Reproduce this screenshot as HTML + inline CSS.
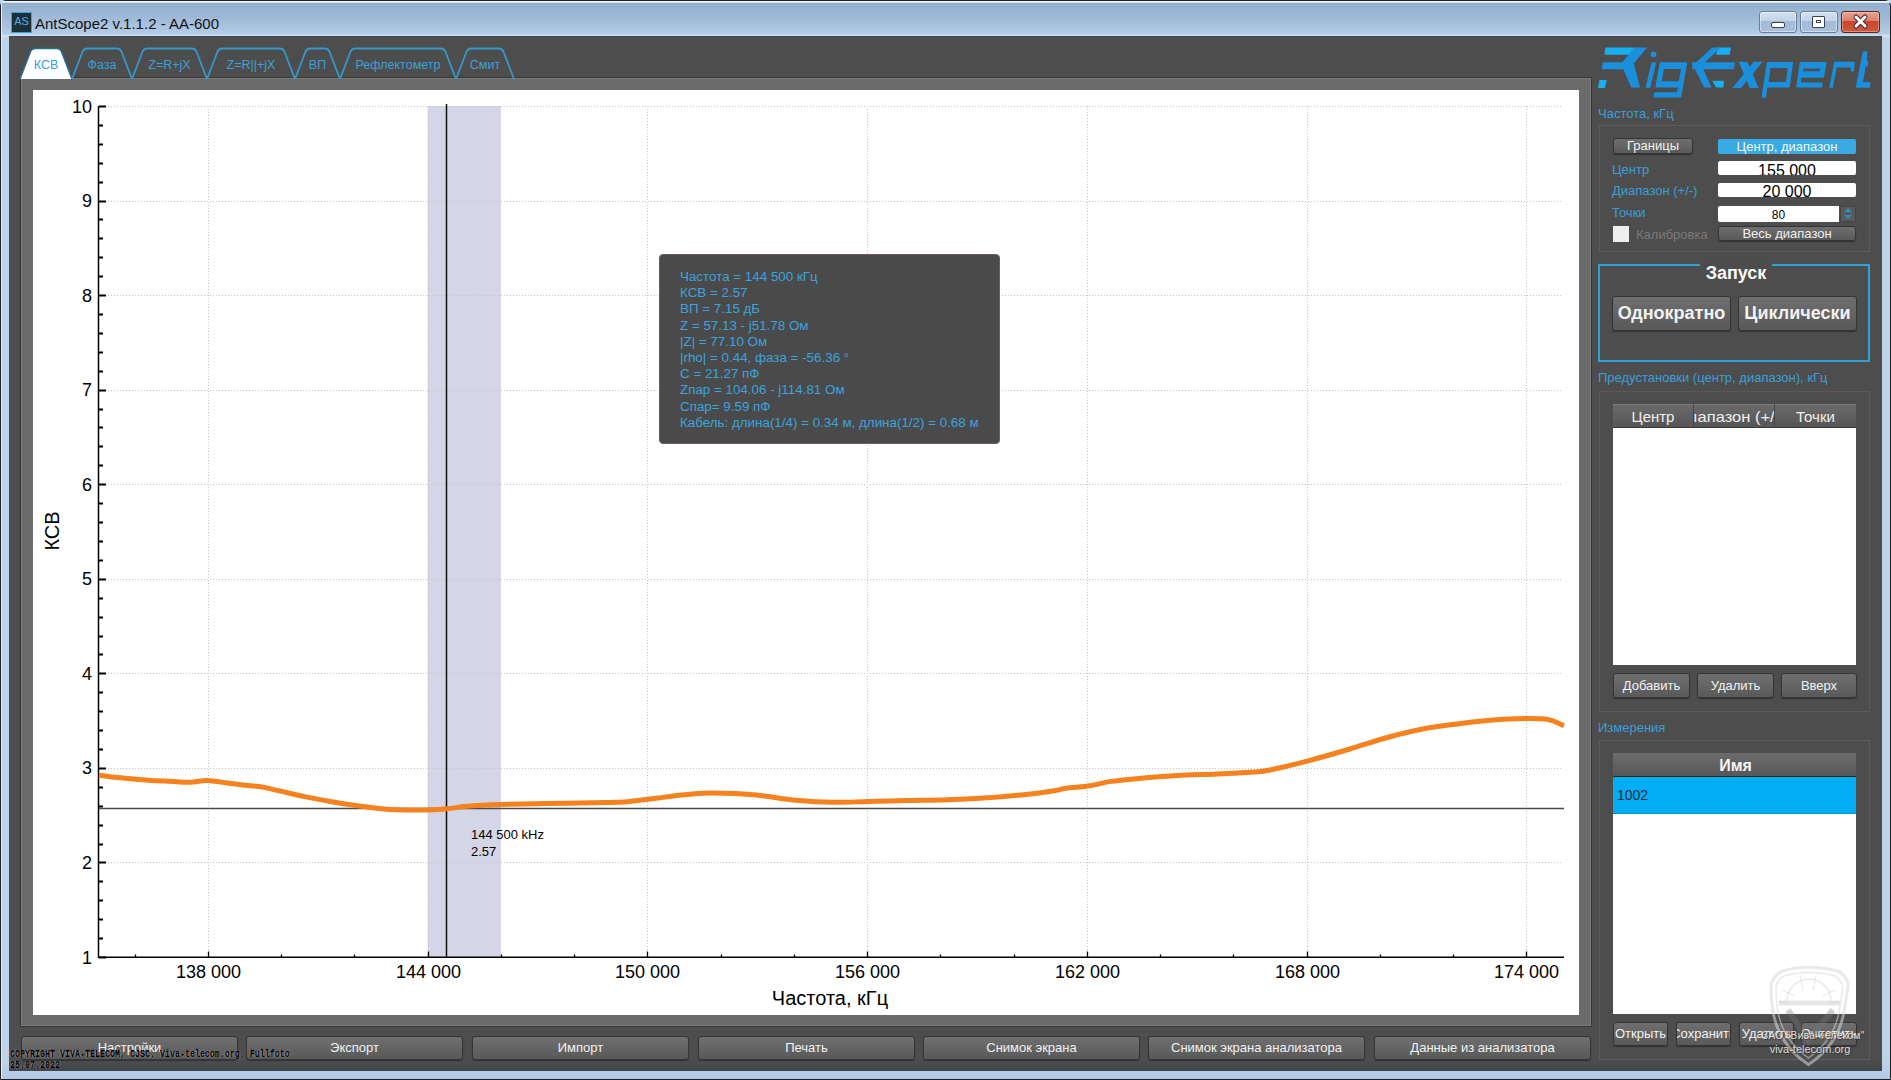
<!DOCTYPE html>
<html><head><meta charset="utf-8">
<style>
*{box-sizing:border-box;margin:0;padding:0}
html,body{width:1891px;height:1080px;overflow:hidden}
body{position:relative;font-family:"Liberation Sans", sans-serif;background:#bdd3ea}
.abs{position:absolute}
.btn{position:absolute;border:1px solid #353535;border-radius:3px;background:linear-gradient(#6f6f6f,#595959);color:#f2f2f2;text-align:center;white-space:nowrap;overflow:hidden;box-shadow:0 1px 1px rgba(0,0,0,.35);display:flex;justify-content:center}
.lbl{position:absolute;color:#3a9fd8;font-size:13px;white-space:nowrap}
</style></head><body>
<!-- window frame -->
<div class="abs" style="left:0;top:0;width:1891px;height:1080px;border:1px solid #1e2226;border-radius:6px 6px 0 0;background:linear-gradient(180deg,#94a6c0 0px,#93b1d1 3px,#a0bad8 18px,#b3cde8 33px,#d6e6f5 35px,#bcd3ea 37px,#bcd3ea 1060px,#b0c8e2 1079px)"></div>
<div class="abs" style="left:1px;top:1px;width:1889px;height:2px;background:linear-gradient(#ffffff,#c8d6e6);border-radius:6px 6px 0 0"></div>
<div class="abs" style="left:1px;top:3px;width:1px;height:1076px;background:#e8f2fb"></div>
<!-- title -->
<div class="abs" style="left:11px;top:12px;width:21px;height:21px;background:#1e2f3c;border:1px solid #37a6e0"></div>
<div class="abs" style="left:12px;top:15px;width:19px;text-align:center;font-size:11px;color:#4fb0e0">AS</div>
<div class="abs" style="left:35px;top:15px;font-size:15px;color:#111">AntScope2 v.1.1.2 - AA-600</div>
<!-- caption buttons -->
<div class="abs" style="left:1759px;top:11px;width:38px;height:22px;border:1px solid #6b7f98;border-radius:3px;background:linear-gradient(#d3e1f0 0%,#c2d4e8 45%,#a3bbd8 47%,#a8c0dc 100%);box-shadow:inset 0 0 0 1px rgba(255,255,255,.45)"></div>
<div class="abs" style="left:1771px;top:22px;width:14px;height:6px;background:#fff;border:1px solid #3a4252;border-radius:2px"></div>
<div class="abs" style="left:1800px;top:11px;width:38px;height:22px;border:1px solid #6b7f98;border-radius:3px;background:linear-gradient(#d3e1f0 0%,#c2d4e8 45%,#a3bbd8 47%,#a8c0dc 100%);box-shadow:inset 0 0 0 1px rgba(255,255,255,.45)"></div>
<div class="abs" style="left:1812px;top:16px;width:13px;height:12px;background:#fff;border:1px solid #3a4252;border-radius:1px"></div>
<div class="abs" style="left:1816px;top:20px;width:5px;height:3px;border:1px solid #3a4252"></div>
<div class="abs" style="left:1841px;top:11px;width:39px;height:22px;border:1px solid #5a2620;border-radius:3px;background:linear-gradient(#eba394 0%,#dc7d6a 45%,#c9452c 47%,#cf5a3e 100%);box-shadow:inset 0 0 0 1px rgba(255,220,210,.4)"></div>
<svg class="abs" style="left:1850px;top:13px" width="22" height="18"><path d="M6,4 L15,13 M15,4 L6,13" stroke="#4a2a2a" stroke-width="5" stroke-linecap="round"/><path d="M6,4 L15,13 M15,4 L6,13" stroke="#fff" stroke-width="3" stroke-linecap="round"/></svg>
<!-- app content -->
<div class="abs" style="left:9px;top:36px;width:1873px;height:1035px;background:linear-gradient(180deg,#3c434c 0,#4d4d4d 2px,#4d4d4d 1024px,#424548 1035px)"></div>
<!-- chart frame -->
<div class="abs" style="left:20px;top:77px;width:1572px;height:950px;background:#6b6b6b;border:1px solid #363636;box-shadow:inset 1px 1px 0 #7c7c7c,inset -1px -1px 0 #7c7c7c"></div>
<svg width="1891" height="1080" style="position:absolute;left:0;top:0">
<path d="M20.0,79 L30.0,53 Q31.0,48.5 36.0,48.5 L56.0,48.5 Q61.0,48.5 62.0,53 L72.0,79 Z" fill="#fdfeff" stroke="none"/>
<path d="M20.0,79 L30.0,53 Q31.0,48.5 36.0,48.5 L56.0,48.5 Q61.0,48.5 62.0,53 L72.0,79" fill="none" stroke="#2a6f90" stroke-width="1.5"/>
<text x="46.0" y="69" text-anchor="middle" font-family="Liberation Sans, sans-serif" font-size="12.5" fill="#3aa0d5">КСВ</text>
<path d="M72.0,79 L82.0,53 Q83.0,48.5 88.0,48.5 L116.0,48.5 Q121.0,48.5 122.0,53 L132.0,79" fill="none" stroke="#3597c8" stroke-width="1.8"/>
<text x="102.0" y="69" text-anchor="middle" font-family="Liberation Sans, sans-serif" font-size="12.5" fill="#3aa0d5">Фаза</text>
<path d="M132.0,79 L142.0,53 Q143.0,48.5 148.0,48.5 L191.0,48.5 Q196.0,48.5 197.0,53 L207.0,79" fill="none" stroke="#3597c8" stroke-width="1.8"/>
<text x="169.5" y="69" text-anchor="middle" font-family="Liberation Sans, sans-serif" font-size="12.5" fill="#3aa0d5">Z=R+jX</text>
<path d="M207.0,79 L217.0,53 Q218.0,48.5 223.0,48.5 L279.0,48.5 Q284.0,48.5 285.0,53 L295.0,79" fill="none" stroke="#3597c8" stroke-width="1.8"/>
<text x="251.0" y="69" text-anchor="middle" font-family="Liberation Sans, sans-serif" font-size="12.5" fill="#3aa0d5">Z=R||+jX</text>
<path d="M295.0,79 L305.0,53 Q306.0,48.5 311.0,48.5 L324.0,48.5 Q329.0,48.5 330.0,53 L340.0,79" fill="none" stroke="#3597c8" stroke-width="1.8"/>
<text x="317.5" y="69" text-anchor="middle" font-family="Liberation Sans, sans-serif" font-size="12.5" fill="#3aa0d5">ВП</text>
<path d="M340.0,79 L350.0,53 Q351.0,48.5 356.0,48.5 L440.0,48.5 Q445.0,48.5 446.0,53 L456.0,79" fill="none" stroke="#3597c8" stroke-width="1.8"/>
<text x="398.0" y="69" text-anchor="middle" font-family="Liberation Sans, sans-serif" font-size="12.5" fill="#3aa0d5">Рефлектометр</text>
<path d="M456.0,79 L466.0,53 Q467.0,48.5 472.0,48.5 L498.0,48.5 Q503.0,48.5 504.0,53 L514.0,79" fill="none" stroke="#3597c8" stroke-width="1.8"/>
<text x="485.0" y="69" text-anchor="middle" font-family="Liberation Sans, sans-serif" font-size="12.5" fill="#3aa0d5">Смит</text>
</svg>
<div class="abs" style="left:33px;top:90px;width:1546px;height:925px;background:#fff"></div>
<svg width="1891" height="1080" style="position:absolute;left:0;top:0">
<rect x="427.6" y="106" width="73.3" height="851" fill="#d4d5e6"/>
<line x1="208.5" y1="106" x2="208.5" y2="957" stroke="#c4c4c4" stroke-width="1" stroke-dasharray="1,2"/>
<line x1="428.5" y1="106" x2="428.5" y2="957" stroke="#c4c4c4" stroke-width="1" stroke-dasharray="1,2"/>
<line x1="647.5" y1="106" x2="647.5" y2="957" stroke="#c4c4c4" stroke-width="1" stroke-dasharray="1,2"/>
<line x1="867.5" y1="106" x2="867.5" y2="957" stroke="#c4c4c4" stroke-width="1" stroke-dasharray="1,2"/>
<line x1="1087.5" y1="106" x2="1087.5" y2="957" stroke="#c4c4c4" stroke-width="1" stroke-dasharray="1,2"/>
<line x1="1307.5" y1="106" x2="1307.5" y2="957" stroke="#c4c4c4" stroke-width="1" stroke-dasharray="1,2"/>
<line x1="1526.5" y1="106" x2="1526.5" y2="957" stroke="#c4c4c4" stroke-width="1" stroke-dasharray="1,2"/>
<line x1="99" y1="862.5" x2="1563" y2="862.5" stroke="#c4c4c4" stroke-width="1" stroke-dasharray="1,2"/>
<line x1="99" y1="768.5" x2="1563" y2="768.5" stroke="#c4c4c4" stroke-width="1" stroke-dasharray="1,2"/>
<line x1="99" y1="673.5" x2="1563" y2="673.5" stroke="#c4c4c4" stroke-width="1" stroke-dasharray="1,2"/>
<line x1="99" y1="579.5" x2="1563" y2="579.5" stroke="#c4c4c4" stroke-width="1" stroke-dasharray="1,2"/>
<line x1="99" y1="484.5" x2="1563" y2="484.5" stroke="#c4c4c4" stroke-width="1" stroke-dasharray="1,2"/>
<line x1="99" y1="390.5" x2="1563" y2="390.5" stroke="#c4c4c4" stroke-width="1" stroke-dasharray="1,2"/>
<line x1="99" y1="295.5" x2="1563" y2="295.5" stroke="#c4c4c4" stroke-width="1" stroke-dasharray="1,2"/>
<line x1="99" y1="201.5" x2="1563" y2="201.5" stroke="#c4c4c4" stroke-width="1" stroke-dasharray="1,2"/>
<line x1="99" y1="106.5" x2="1563" y2="106.5" stroke="#c4c4c4" stroke-width="1" stroke-dasharray="1,2"/>
<line x1="98.5" y1="106" x2="98.5" y2="958" stroke="#000" stroke-width="1.5"/>
<line x1="98" y1="957.3" x2="1564" y2="957.3" stroke="#000" stroke-width="1.5"/>
<line x1="99" y1="957.5" x2="106" y2="957.5" stroke="#000" stroke-width="2"/>
<line x1="99" y1="938.5" x2="103" y2="938.5" stroke="#000" stroke-width="2"/>
<line x1="99" y1="919.5" x2="103" y2="919.5" stroke="#000" stroke-width="2"/>
<line x1="99" y1="900.5" x2="103" y2="900.5" stroke="#000" stroke-width="2"/>
<line x1="99" y1="881.5" x2="103" y2="881.5" stroke="#000" stroke-width="2"/>
<line x1="99" y1="862.5" x2="106" y2="862.5" stroke="#000" stroke-width="2"/>
<line x1="99" y1="844.5" x2="103" y2="844.5" stroke="#000" stroke-width="2"/>
<line x1="99" y1="825.5" x2="103" y2="825.5" stroke="#000" stroke-width="2"/>
<line x1="99" y1="806.5" x2="103" y2="806.5" stroke="#000" stroke-width="2"/>
<line x1="99" y1="787.5" x2="103" y2="787.5" stroke="#000" stroke-width="2"/>
<line x1="99" y1="768.5" x2="106" y2="768.5" stroke="#000" stroke-width="2"/>
<line x1="99" y1="749.5" x2="103" y2="749.5" stroke="#000" stroke-width="2"/>
<line x1="99" y1="730.5" x2="103" y2="730.5" stroke="#000" stroke-width="2"/>
<line x1="99" y1="711.5" x2="103" y2="711.5" stroke="#000" stroke-width="2"/>
<line x1="99" y1="692.5" x2="103" y2="692.5" stroke="#000" stroke-width="2"/>
<line x1="99" y1="673.5" x2="106" y2="673.5" stroke="#000" stroke-width="2"/>
<line x1="99" y1="654.5" x2="103" y2="654.5" stroke="#000" stroke-width="2"/>
<line x1="99" y1="636.5" x2="103" y2="636.5" stroke="#000" stroke-width="2"/>
<line x1="99" y1="617.5" x2="103" y2="617.5" stroke="#000" stroke-width="2"/>
<line x1="99" y1="598.5" x2="103" y2="598.5" stroke="#000" stroke-width="2"/>
<line x1="99" y1="579.5" x2="106" y2="579.5" stroke="#000" stroke-width="2"/>
<line x1="99" y1="560.5" x2="103" y2="560.5" stroke="#000" stroke-width="2"/>
<line x1="99" y1="541.5" x2="103" y2="541.5" stroke="#000" stroke-width="2"/>
<line x1="99" y1="522.5" x2="103" y2="522.5" stroke="#000" stroke-width="2"/>
<line x1="99" y1="503.5" x2="103" y2="503.5" stroke="#000" stroke-width="2"/>
<line x1="99" y1="484.5" x2="106" y2="484.5" stroke="#000" stroke-width="2"/>
<line x1="99" y1="465.5" x2="103" y2="465.5" stroke="#000" stroke-width="2"/>
<line x1="99" y1="446.5" x2="103" y2="446.5" stroke="#000" stroke-width="2"/>
<line x1="99" y1="427.5" x2="103" y2="427.5" stroke="#000" stroke-width="2"/>
<line x1="99" y1="409.5" x2="103" y2="409.5" stroke="#000" stroke-width="2"/>
<line x1="99" y1="390.5" x2="106" y2="390.5" stroke="#000" stroke-width="2"/>
<line x1="99" y1="371.5" x2="103" y2="371.5" stroke="#000" stroke-width="2"/>
<line x1="99" y1="352.5" x2="103" y2="352.5" stroke="#000" stroke-width="2"/>
<line x1="99" y1="333.5" x2="103" y2="333.5" stroke="#000" stroke-width="2"/>
<line x1="99" y1="314.5" x2="103" y2="314.5" stroke="#000" stroke-width="2"/>
<line x1="99" y1="295.5" x2="106" y2="295.5" stroke="#000" stroke-width="2"/>
<line x1="99" y1="276.5" x2="103" y2="276.5" stroke="#000" stroke-width="2"/>
<line x1="99" y1="257.5" x2="103" y2="257.5" stroke="#000" stroke-width="2"/>
<line x1="99" y1="238.5" x2="103" y2="238.5" stroke="#000" stroke-width="2"/>
<line x1="99" y1="219.5" x2="103" y2="219.5" stroke="#000" stroke-width="2"/>
<line x1="99" y1="201.5" x2="106" y2="201.5" stroke="#000" stroke-width="2"/>
<line x1="99" y1="182.5" x2="103" y2="182.5" stroke="#000" stroke-width="2"/>
<line x1="99" y1="163.5" x2="103" y2="163.5" stroke="#000" stroke-width="2"/>
<line x1="99" y1="144.5" x2="103" y2="144.5" stroke="#000" stroke-width="2"/>
<line x1="99" y1="125.5" x2="103" y2="125.5" stroke="#000" stroke-width="2"/>
<line x1="99" y1="106.5" x2="106" y2="106.5" stroke="#000" stroke-width="2"/>
<text x="92" y="963.5" text-anchor="end" font-family='Liberation Sans, sans-serif' font-size="18" fill="#000">1</text>
<text x="92" y="868.9" text-anchor="end" font-family='Liberation Sans, sans-serif' font-size="18" fill="#000">2</text>
<text x="92" y="774.4" text-anchor="end" font-family='Liberation Sans, sans-serif' font-size="18" fill="#000">3</text>
<text x="92" y="679.8" text-anchor="end" font-family='Liberation Sans, sans-serif' font-size="18" fill="#000">4</text>
<text x="92" y="585.3" text-anchor="end" font-family='Liberation Sans, sans-serif' font-size="18" fill="#000">5</text>
<text x="92" y="490.7" text-anchor="end" font-family='Liberation Sans, sans-serif' font-size="18" fill="#000">6</text>
<text x="92" y="396.2" text-anchor="end" font-family='Liberation Sans, sans-serif' font-size="18" fill="#000">7</text>
<text x="92" y="301.6" text-anchor="end" font-family='Liberation Sans, sans-serif' font-size="18" fill="#000">8</text>
<text x="92" y="207.1" text-anchor="end" font-family='Liberation Sans, sans-serif' font-size="18" fill="#000">9</text>
<text x="92" y="112.5" text-anchor="end" font-family='Liberation Sans, sans-serif' font-size="18" fill="#000">10</text>
<line x1="135.5" y1="954.5" x2="135.5" y2="957" stroke="#000" stroke-width="1.3"/>
<line x1="208.5" y1="951.5" x2="208.5" y2="957" stroke="#000" stroke-width="1.3"/>
<text x="208.5" y="978" text-anchor="middle" font-family='Liberation Sans, sans-serif' font-size="18" fill="#000">138 000</text>
<line x1="281.5" y1="954.5" x2="281.5" y2="957" stroke="#000" stroke-width="1.3"/>
<line x1="354.5" y1="954.5" x2="354.5" y2="957" stroke="#000" stroke-width="1.3"/>
<line x1="428.5" y1="951.5" x2="428.5" y2="957" stroke="#000" stroke-width="1.3"/>
<text x="428.5" y="978" text-anchor="middle" font-family='Liberation Sans, sans-serif' font-size="18" fill="#000">144 000</text>
<line x1="501.5" y1="954.5" x2="501.5" y2="957" stroke="#000" stroke-width="1.3"/>
<line x1="574.5" y1="954.5" x2="574.5" y2="957" stroke="#000" stroke-width="1.3"/>
<line x1="647.5" y1="951.5" x2="647.5" y2="957" stroke="#000" stroke-width="1.3"/>
<text x="647.5" y="978" text-anchor="middle" font-family='Liberation Sans, sans-serif' font-size="18" fill="#000">150 000</text>
<line x1="721.5" y1="954.5" x2="721.5" y2="957" stroke="#000" stroke-width="1.3"/>
<line x1="794.5" y1="954.5" x2="794.5" y2="957" stroke="#000" stroke-width="1.3"/>
<line x1="867.5" y1="951.5" x2="867.5" y2="957" stroke="#000" stroke-width="1.3"/>
<text x="867.5" y="978" text-anchor="middle" font-family='Liberation Sans, sans-serif' font-size="18" fill="#000">156 000</text>
<line x1="940.5" y1="954.5" x2="940.5" y2="957" stroke="#000" stroke-width="1.3"/>
<line x1="1014.5" y1="954.5" x2="1014.5" y2="957" stroke="#000" stroke-width="1.3"/>
<line x1="1087.5" y1="951.5" x2="1087.5" y2="957" stroke="#000" stroke-width="1.3"/>
<text x="1087.5" y="978" text-anchor="middle" font-family='Liberation Sans, sans-serif' font-size="18" fill="#000">162 000</text>
<line x1="1160.5" y1="954.5" x2="1160.5" y2="957" stroke="#000" stroke-width="1.3"/>
<line x1="1233.5" y1="954.5" x2="1233.5" y2="957" stroke="#000" stroke-width="1.3"/>
<line x1="1307.5" y1="951.5" x2="1307.5" y2="957" stroke="#000" stroke-width="1.3"/>
<text x="1307.5" y="978" text-anchor="middle" font-family='Liberation Sans, sans-serif' font-size="18" fill="#000">168 000</text>
<line x1="1380.5" y1="954.5" x2="1380.5" y2="957" stroke="#000" stroke-width="1.3"/>
<line x1="1453.5" y1="954.5" x2="1453.5" y2="957" stroke="#000" stroke-width="1.3"/>
<line x1="1526.5" y1="951.5" x2="1526.5" y2="957" stroke="#000" stroke-width="1.3"/>
<text x="1526.5" y="978" text-anchor="middle" font-family='Liberation Sans, sans-serif' font-size="18" fill="#000">174 000</text>
<line x1="99" y1="808.5" x2="1564" y2="808.5" stroke="#4a4a4a" stroke-width="1.5"/>
<line x1="446.5" y1="104" x2="446.5" y2="957" stroke="#111" stroke-width="1.5"/>
<path d="M99.0,775.2 C102.7,775.6 112.8,777.0 121.0,777.8 C129.2,778.6 139.2,779.6 148.0,780.2 C156.8,780.8 167.0,781.1 174.0,781.5 C181.0,781.9 184.5,782.5 190.0,782.3 C195.5,782.1 200.8,780.4 207.0,780.5 C213.2,780.6 221.0,782.2 227.0,783.0 C233.0,783.8 237.2,784.3 243.0,785.0 C248.8,785.7 255.8,786.0 262.0,787.0 C268.2,788.0 272.7,789.4 280.0,791.0 C287.3,792.6 297.2,795.1 306.0,796.9 C314.8,798.7 324.2,800.5 333.0,802.0 C341.8,803.5 350.2,804.8 359.0,806.0 C367.8,807.2 377.2,808.6 386.0,809.3 C394.8,810.0 405.0,809.9 412.0,810.0 C419.0,810.1 422.2,810.2 428.0,810.0 C433.8,809.8 440.0,809.5 447.0,808.8 C454.0,808.1 461.2,806.7 470.0,806.0 C478.8,805.3 487.5,804.9 500.0,804.5 C512.5,804.1 529.2,803.8 545.0,803.5 C560.8,803.2 583.2,802.9 595.0,802.7 C606.8,802.5 610.2,802.5 616.0,802.3 C621.8,802.1 623.3,802.2 630.0,801.5 C636.7,800.8 647.3,799.4 656.0,798.3 C664.7,797.2 673.2,795.9 682.0,795.0 C690.8,794.1 700.2,793.2 709.0,793.0 C717.8,792.8 726.2,793.1 735.0,793.6 C743.8,794.1 751.8,794.6 762.0,795.7 C772.2,796.8 784.2,799.1 796.0,800.2 C807.8,801.3 821.0,802.1 833.0,802.3 C845.0,802.5 855.7,801.8 868.0,801.5 C880.3,801.2 893.8,800.8 907.0,800.5 C920.2,800.2 933.7,800.2 947.0,799.7 C960.3,799.2 973.8,798.7 987.0,797.8 C1000.2,796.9 1015.0,795.5 1026.0,794.4 C1037.0,793.3 1046.3,792.0 1053.0,791.0 C1059.7,790.0 1059.8,789.2 1066.0,788.3 C1072.2,787.4 1082.5,786.9 1090.0,785.7 C1097.5,784.6 1103.0,782.6 1111.0,781.4 C1119.0,780.2 1127.0,779.5 1138.0,778.5 C1149.0,777.5 1163.8,776.1 1177.0,775.4 C1190.2,774.6 1204.5,774.6 1217.0,774.0 C1229.5,773.4 1243.2,772.7 1252.0,772.0 C1260.8,771.3 1260.3,772.0 1270.0,770.0 C1279.7,768.0 1296.7,763.8 1310.0,760.3 C1323.3,756.8 1336.8,752.9 1350.0,749.0 C1363.2,745.1 1375.8,740.5 1389.0,737.0 C1402.2,733.5 1415.8,730.2 1429.0,727.8 C1442.2,725.4 1454.8,724.0 1468.0,722.5 C1481.2,721.0 1495.2,719.6 1508.0,719.0 C1520.8,718.4 1535.7,717.9 1545.0,719.0 C1554.3,720.1 1560.8,724.6 1564.0,725.7" fill="none" stroke="#f5821e" stroke-width="5" stroke-linejoin="round"/>
<text x="830" y="1005" text-anchor="middle" font-family='Liberation Sans, sans-serif' font-size="20" fill="#000">Частота, кГц</text>
<text transform="translate(59,531) rotate(-90)" text-anchor="middle" font-family='Liberation Sans, sans-serif' font-size="20" fill="#000">КСВ</text>
<text x="471" y="839" font-family='Liberation Sans, sans-serif' font-size="13" fill="#000">144 500 kHz</text>
<text x="471" y="856" font-family='Liberation Sans, sans-serif' font-size="13" fill="#000">2.57</text>
</svg><div class="abs" style="left:659px;top:254px;width:341px;height:190px;background:#4a4a4a;border-radius:4px;border:1px solid #6a5a6a"></div>
<div class="abs" style="left:680px;top:269px;color:#3aa3df;font-size:12px;line-height:16.2px;white-space:pre;transform:scaleX(1.115);transform-origin:0 0">Частота = 144 500 кГц
КСВ = 2.57
ВП = 7.15 дБ
Z = 57.13 - j51.78 Ом
|Z| = 77.10 Ом
|rho| = 0.44, фаза = -56.36 °
C = 21.27 пФ
Zпар = 104.06 - j114.81 Ом
Спар= 9.59 пФ
Кабель: длина(1/4) = 0.34 м, длина(1/2) = 0.68 м</div>
<svg width="1891" height="1080" style="position:absolute;left:0;top:0">
<g fill="#1a8fdc">
<polygon fill="#18aef0" points="1605.5,47.4 1634.8,47.4 1629.3,54.7 1604.3,54.7"/>
<polygon points="1602.7,62.2 1631,62.2 1627.3,69.3 1601.9,69.3"/>
<polygon points="1634.4,47.4 1647.1,47.4 1633,64.5 1620.5,64.5"/>
<polygon points="1621,64 1634,64 1640,87.6 1631.2,87.6"/>
<polygon fill="#18aef0" points="1599.5,80 1606.7,80 1605,88 1598,88"/>
<circle cx="1653.5" cy="54.3" r="2.9"/>
<polygon points="1651.5,62.4 1656.2,62.4 1650.3,87.8 1645.5,87.8"/>
<path fill-rule="evenodd" d="M1659.8,62.2 L1687.2,62.2 L1681.2,97.5 L1653.5,97.5 L1654.3,92.3 L1677.1,92.3 L1678,87.6 L1655.3,87.6 Z M1663.8,68.9 L1681.2,68.9 L1678.6,81.2 L1661.8,81.2 Z"/>
<polygon fill="#18aef0" points="1718,47.4 1731,47.4 1729.6,54.7 1716.1,54.7"/>
<polygon points="1712.2,47.4 1721,47.4 1701,66 1692.3,66"/>
<polygon points="1692.3,62.2 1735,62.2 1734,69.3 1692.3,69.3"/>
<polygon points="1692.3,64 1701,64 1711.4,87.6 1704.2,87.6"/>
<polygon fill="#18aef0" points="1712.2,80.8 1724.1,80.8 1723.3,87.6 1716.1,87.6"/>
<polygon points="1738.7,61.8 1747.5,61.8 1758.6,88 1749.8,88"/>
<polygon points="1753.8,61.8 1762.5,61.8 1741.1,88 1732.4,88"/>
<path fill-rule="evenodd" d="M1767,62 L1793.3,62 L1789.6,87.5 L1767.2,87.5 L1766,97.7 L1761.4,97.7 Z M1770.5,68 L1787.8,68 L1786,82 L1768.6,82 Z"/>
<path fill-rule="evenodd" d="M1799.8,62 L1826.7,62 L1823.9,77.8 L1801.5,77.8 L1800.9,82.4 L1822.9,82.4 L1822,87.5 L1796.1,87.5 Z M1803.5,68.5 L1820.2,68.5 L1819.7,71.3 L1803,71.3 Z"/>
<polygon points="1834.3,61.8 1854.7,61.8 1854,71.5 1850.6,71.5 1851,67.4 1836.8,67.4 1832.8,87.8 1829.2,87.8"/>
<polygon points="1862.8,51.6 1867.4,51.6 1866.6,60.8 1868.4,60.8 1867.8,66.4 1865.8,66.4 1862.9,82.2 1870.5,82.2 1870,87.8 1855.7,87.8"/>
</g></svg>
<div class="lbl" style="left:1598px;top:106px">Частота, кГц</div>
<div class="abs" style="left:1599px;top:125px;width:271px;height:127px;border:1px solid #5a5a5a"></div>
<div class="btn" style="left:1613px;top:138px;width:80px;height:16px;font-size:13px;line-height:14px">Границы</div>
<div class="abs" style="left:1718px;top:139px;width:138px;height:15px;background:#3aaae2;border-radius:2px;color:#f4f8fc;font-size:13px;line-height:15px;text-align:center">Центр, диапазон</div>
<div class="lbl" style="left:1612px;top:162px">Центр</div>
<div class="abs" style="left:1718px;top:161px;width:138px;height:14px;background:#fff;border-radius:2px;overflow:hidden;color:#000;font-size:16px;line-height:19px;text-align:center">155 000</div>
<div class="lbl" style="left:1612px;top:183px">Диапазон (+/-)</div>
<div class="abs" style="left:1718px;top:183px;width:138px;height:14px;background:#fff;border-radius:2px;overflow:hidden;color:#000;font-size:16px;line-height:18px;text-align:center">20 000</div>
<div class="lbl" style="left:1612px;top:205px">Точки</div>
<div class="abs" style="left:1718px;top:206px;width:121px;height:16px;background:#fff;border-radius:2px 0 0 2px;color:#000;font-size:12px;line-height:18px;text-align:center">80</div>
<div class="abs" style="left:1840px;top:206px;width:16px;height:16px;background:#5a5a5a;border:1px solid #444"></div>
<div class="abs" style="left:1844px;top:208px;width:0;height:0;border-left:4px solid transparent;border-right:4px solid transparent;border-bottom:4px solid #2c8fbf"></div>
<div class="abs" style="left:1844px;top:215px;width:0;height:0;border-left:4px solid transparent;border-right:4px solid transparent;border-top:4px solid #2c8fbf"></div>
<div class="abs" style="left:1613px;top:226px;width:16px;height:16px;background:#eeeeee"></div>
<div class="lbl" style="left:1636px;top:227px;color:#7a7a7a">Калибровка</div>
<div class="btn" style="left:1718px;top:226px;width:138px;height:15px;font-size:13px;line-height:14px">Весь диапазон</div>

<!-- Запуск -->
<div class="abs" style="left:1598px;top:264px;width:272px;height:98px;border:2px solid #2da2d6"></div>
<div class="abs" style="left:1700px;top:262px;width:72px;height:6px;background:#4c4c4c"></div>
<div class="abs" style="left:1600px;top:263px;width:272px;text-align:center;color:#fafafa;font-size:18px;font-weight:bold">Запуск</div>
<div class="btn" style="left:1612px;top:296px;width:119px;height:35px;font-size:18px;font-weight:bold;line-height:33px">Однократно</div>
<div class="btn" style="left:1738px;top:296px;width:119px;height:35px;font-size:18px;font-weight:bold;line-height:33px">Циклически</div>

<div class="lbl" style="left:1598px;top:370px">Предустановки (центр, диапазон), кГц</div>
<div class="abs" style="left:1599px;top:391px;width:271px;height:321px;border:1px solid #5a5a5a"></div>
<div class="abs" style="left:1613px;top:404px;width:243px;height:24px;background:linear-gradient(#6a6a6a,#565656);border-top:1px solid #7a7a7a;border-bottom:1px solid #3a3a3a"></div>
<div class="abs" style="left:1693px;top:404px;width:1px;height:24px;background:#444"></div>
<div class="abs" style="left:1774px;top:404px;width:1px;height:24px;background:#444"></div>
<div class="abs" style="left:1613px;top:408px;width:80px;text-align:center;color:#f0f0f0;font-size:15px">Центр</div>
<div class="abs" style="left:1694px;top:408px;width:80px;overflow:hidden;color:#f0f0f0;font-size:15px;white-space:nowrap"><span style="position:relative;left:-1px;display:inline-block;transform:scaleX(1.1);transform-origin:0 0">ıапазон (+/-)</span></div>
<div class="abs" style="left:1775px;top:408px;width:81px;text-align:center;color:#f0f0f0;font-size:15px">Точки</div>
<div class="abs" style="left:1613px;top:428px;width:243px;height:237px;background:#fff"></div>
<div class="btn" style="left:1613px;top:673px;width:77px;height:25px;font-size:13px;line-height:23px">Добавить</div>
<div class="btn" style="left:1697px;top:673px;width:77px;height:25px;font-size:13px;line-height:23px">Удалить</div>
<div class="btn" style="left:1781px;top:673px;width:76px;height:25px;font-size:13px;line-height:23px">Вверх</div>

<div class="lbl" style="left:1598px;top:720px">Измерения</div>
<div class="abs" style="left:1599px;top:740px;width:271px;height:320px;border:1px solid #5a5a5a"></div>
<div class="abs" style="left:1613px;top:753px;width:243px;height:24px;background:linear-gradient(#6c6c6c,#575757);border-bottom:1px solid #222"></div>
<div class="abs" style="left:1614px;top:757px;width:243px;text-align:center;color:#f4f4f4;font-size:16px;font-weight:bold">Имя</div>
<div class="abs" style="left:1613px;top:777px;width:243px;height:37px;background:#03aef4;border-bottom:1px dotted #1a6f9a"></div>
<div class="abs" style="left:1617px;top:787px;color:#0b2b44;font-size:14px">1002</div>
<div class="abs" style="left:1613px;top:814px;width:243px;height:200px;background:#fff"></div>
<div class="btn" style="left:1613px;top:1022px;width:55px;height:24px;font-size:13px;line-height:22px">Открыть</div>
<div class="btn" style="left:1676px;top:1022px;width:55px;height:24px;font-size:13px;line-height:22px">Сохранить</div>
<div class="btn" style="left:1739px;top:1022px;width:55px;height:24px;font-size:13px;line-height:22px">Удалить</div>
<div class="btn" style="left:1801px;top:1022px;width:56px;height:24px;font-size:13px;line-height:22px">Очистить</div>
<div class="btn" style="left:21px;top:1036px;width:217px;height:24px;font-size:13px;line-height:22px">Настройки</div>
<div class="btn" style="left:246px;top:1036px;width:217px;height:24px;font-size:13px;line-height:22px">Экспорт</div>
<div class="btn" style="left:472px;top:1036px;width:217px;height:24px;font-size:13px;line-height:22px">Импорт</div>
<div class="btn" style="left:698px;top:1036px;width:217px;height:24px;font-size:13px;line-height:22px">Печать</div>
<div class="btn" style="left:923px;top:1036px;width:217px;height:24px;font-size:13px;line-height:22px">Снимок экрана</div>
<div class="btn" style="left:1148px;top:1036px;width:217px;height:24px;font-size:13px;line-height:22px">Снимок экрана анализатора</div>
<div class="btn" style="left:1374px;top:1036px;width:217px;height:24px;font-size:13px;line-height:22px">Данные из анализатора</div>
<svg width="1891" height="1080" style="position:absolute;left:0;top:0">
<g fill="none" stroke="rgba(215,215,215,0.55)">
<path stroke-width="3" d="M1771,983.6 Q1776,974 1781.3,971.4 Q1808,963 1839,971.4 Q1845,975 1848.4,983.6 Q1846,1000 1844,1012 Q1838,1045 1808.4,1064.6 Q1779,1045 1773,1012 Q1771,1000 1771,983.6 Z"/>
<path stroke-width="1.5" d="M1776,986 Q1779,978 1784,976 Q1808,969 1835,976 Q1840,979 1843,986 Q1841,1002 1839,1012 Q1834,1040 1808.4,1058 Q1783,1040 1778,1012 Q1776,1002 1776,986 Z"/>
<path stroke-width="1.5" d="M1787,1001 A22,22 0 0 1 1831,1001"/>
<path stroke-width="1.2" d="M1800,975 L1803,990 M1816,975 L1813,990 M1782,990 L1795,996 M1835,990 L1822,996 M1779,1002 L1789,1003 M1838,1002 L1828,1003"/>
<path stroke-width="5" stroke="rgba(200,200,200,0.45)" d="M1779,1003 L1840,1003"/>
<path stroke-width="6" stroke="rgba(120,120,120,0.35)" d="M1788,1010 L1808,1040 L1833,1010"/>
</g>
</svg>
<div class="abs" style="left:1762px;top:1030px;width:100px;text-align:center;font-size:10px;color:#e0e0e0;letter-spacing:0.4px;text-shadow:1px 1px 1px #333;white-space:nowrap">ЗАО "Вива-Телеком"</div>
<div class="abs" style="left:1760px;top:1043px;width:100px;text-align:center;font-size:11px;color:#dcdcdc;text-shadow:1px 1px 1px #333;white-space:nowrap">viva-telecom.org</div>
<div class="abs" style="left:10px;top:1049px;font-family:'Liberation Mono',monospace;font-size:10.5px;line-height:11px;color:#000;font-weight:bold;white-space:pre;-webkit-text-stroke:0.3px #000;text-shadow:0 0 1px #ddd,0 0 1px #ddd;transform:scaleX(0.793);transform-origin:0 0">COPYRIGHT VIVA-TELECOM, CJSC. Viva-telecom.org. Fullfoto
25.07.2022</div>
</body></html>
